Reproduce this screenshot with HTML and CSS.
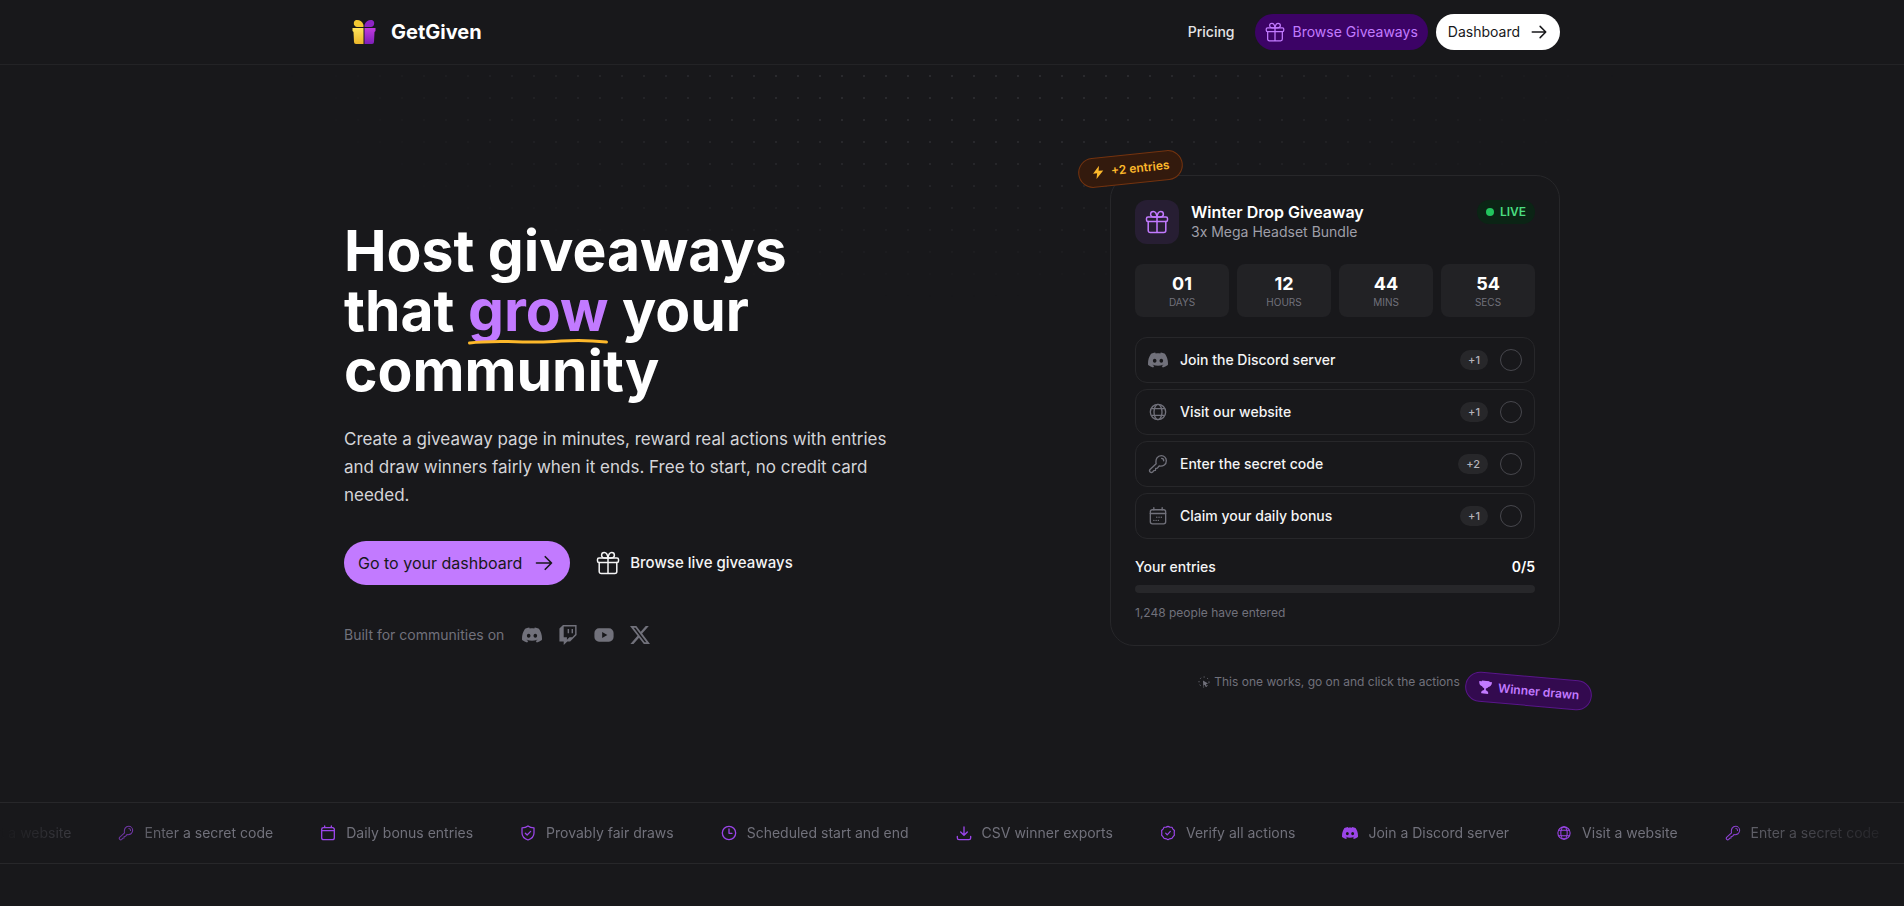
FILE: index.html
```html
<!DOCTYPE html>
<html lang="en">
<head>
    <meta charset="UTF-8">
    <meta name="viewport" content="width=device-width, initial-scale=1.0">
    <title>GetGiven - Host giveaways that grow your community</title>
    <link rel="stylesheet" href="styles.css">
</head>
<body>

<!-- Icon sprite -->
<svg class="sprite" aria-hidden="true">
    <symbol id="gift" viewBox="0 0 24 24">
        <g fill="none" stroke="currentColor" stroke-width="1.5" stroke-linecap="round" stroke-linejoin="round">
            <rect x="1.5" y="7" width="21" height="4.5" rx="1.5"/>
            <path d="M3.2 11.5v9a2 2 0 0 0 2 2h13.6a2 2 0 0 0 2-2v-9M12 7v15.5M12 7C11.5 3 10 1.5 8.3 1.5a2.7 2.7 0 0 0-2.7 2.7C5.6 6 7 7 9 7h3M12 7c.5-4 2-5.5 3.7-5.5a2.7 2.7 0 0 1 2.7 2.7C18.4 6 17 7 15 7h-3"/>
        </g>
    </symbol>
    <symbol id="arrow" viewBox="0 0 24 24">
        <path fill="none" stroke="currentColor" stroke-width="2" stroke-linecap="round" stroke-linejoin="round" d="M3 12h18M13.5 4.5 21 12l-7.5 7.5"/>
    </symbol>
    <symbol id="discord" viewBox="0 0 24 24">
        <path fill="currentColor" d="M20.317 4.3698a19.7913 19.7913 0 00-4.8851-1.5152.0741.0741 0 00-.0785.0371c-.211.3753-.4447.8648-.6083 1.2495-1.8447-.2762-3.68-.2762-5.4868 0-.1636-.3933-.4058-.8742-.6177-1.2495a.077.077 0 00-.0785-.037 19.7363 19.7363 0 00-4.8852 1.515.0699.0699 0 00-.0321.0277C.5334 9.0458-.319 13.5799.0992 18.0578a.0824.0824 0 00.0312.0561c2.0528 1.5076 4.0413 2.4228 5.9929 3.0294a.0777.0777 0 00.0842-.0276c.4616-.6304.8731-1.2952 1.226-1.9942a.076.076 0 00-.0416-.1057c-.6528-.2476-1.2743-.5495-1.8722-.8923a.077.077 0 01-.0076-.1277c.1258-.0943.2517-.1923.3718-.2914a.0743.0743 0 01.0776-.0105c3.9278 1.7933 8.18 1.7933 12.0614 0a.0739.0739 0 01.0785.0095c.1202.099.246.1981.3728.2924a.077.077 0 01-.0066.1276 12.2986 12.2986 0 01-1.873.8914.0766.0766 0 00-.0407.1067c.3604.698.7719 1.3628 1.225 1.9932a.076.076 0 00.0842.0286c1.961-.6067 3.9495-1.5219 6.0023-3.0294a.077.077 0 00.0313-.0552c.5004-5.177-.8382-9.6739-3.5485-13.6604a.061.061 0 00-.0312-.0286zM8.02 15.3312c-1.1825 0-2.1569-1.0857-2.1569-2.419 0-1.3332.9555-2.4189 2.157-2.4189 1.2108 0 2.1757 1.0952 2.1568 2.419 0 1.3332-.9555 2.4189-2.1569 2.4189zm7.9748 0c-1.1825 0-2.1569-1.0857-2.1569-2.419 0-1.3332.9554-2.4189 2.1569-2.4189 1.2108 0 2.1757 1.0952 2.1568 2.419 0 1.3332-.946 2.4189-2.1568 2.4189Z"/>
    </symbol>
    <symbol id="twitch" viewBox="0 0 24 24">
        <path fill="currentColor" d="M11.571 4.714h1.715v5.143H11.57zm4.715 0H18v5.143h-1.714zM6 0L1.714 4.286v15.428h5.143V24l4.286-4.286h3.428L22.286 12V0zm14.571 11.143l-3.428 3.428h-3.429l-3 3v-3H6.857V1.714h13.714Z"/>
    </symbol>
    <symbol id="youtube" viewBox="0 0 24 24">
        <path fill="currentColor" fill-rule="evenodd" d="M6 4h12a5.5 5.5 0 0 1 5.5 5.5v5A5.5 5.5 0 0 1 18 20H6a5.5 5.5 0 0 1-5.5-5.5v-5A5.5 5.5 0 0 1 6 4zm3.8 4.5v7L16 12z"/>
    </symbol>
    <symbol id="x-logo" viewBox="0 0 24 24">
        <path fill="currentColor" d="M18.901 1.153h3.68l-8.04 9.19L24 22.846h-7.406l-5.8-7.584-6.638 7.584H.474l8.6-9.83L0 1.154h7.594l5.243 6.932ZM17.61 20.644h2.039L6.486 3.24H4.298Z"/>
    </symbol>
    <symbol id="globe" viewBox="0 0 24 24">
        <g fill="none" stroke="currentColor" stroke-width="1.6">
            <circle cx="12" cy="12" r="9.2"/>
            <ellipse cx="12" cy="12" rx="4.8" ry="9.2"/>
            <path d="M4 8h16M4 16h16"/>
        </g>
    </symbol>
    <symbol id="key" viewBox="0 0 24 24">
        <g fill="none" stroke="currentColor" stroke-width="1.6" stroke-linecap="round" stroke-linejoin="round">
            <path d="M9.8 11.8C8.6 6 11.5 2 16 2a6 6 0 0 1 6 6c0 4.5-3.6 7.2-8.6 6.4L11.2 17l-2 .4-.3 2.2-2 .4L5.600 21.600a2.200 2.200 0 0 1-3.200-3z"/>
            <path d="M16.300 5.300a2.700 2.700 0 0 1 2.500 2.800"/>
        </g>
    </symbol>
    <symbol id="calendar-days" viewBox="0 0 24 24">
        <g fill="none" stroke="currentColor" stroke-width="1.6" stroke-linecap="round">
            <rect x="2.8" y="4.5" width="18.4" height="17" rx="2.5"/>
            <path d="M2.8 9h18.400M7 2v2.500M17 2v2.500"/>
            <path stroke-dasharray=".1 2.6" d="M10.500 13.500h7M7 17.300h8"/>
        </g>
    </symbol>
    <symbol id="calendar" viewBox="0 0 24 24">
        <path fill="none" stroke="currentColor" stroke-width="2" stroke-linecap="round" d="M5 4h14a2.5 2.5 0 0 1 2.5 2.5V19a3 3 0 0 1-3 3h-13a3 3 0 0 1-3-3V6.500A2.5 2.5 0 0 1 5 4zM2.500 8.500h19M7 1.500V4M17 1.500V4"/>
    </symbol>
    <symbol id="shield" viewBox="0 0 24 24">
        <path fill="none" stroke="currentColor" stroke-width="1.9" stroke-linecap="round" stroke-linejoin="round" d="M12 1.500c2.500 2 5.500 2.800 9 2.800V12c0 5-3.500 8.600-9 10.500C6.500 20.600 3 17 3 12V4.300c3.500 0 6.500-.8 9-2.800zM8 12.300l2.700 2.700L16 9.500"/>
    </symbol>
    <symbol id="clock" viewBox="0 0 24 24">
        <g fill="none" stroke="currentColor" stroke-width="2" stroke-linecap="round" stroke-linejoin="round">
            <circle cx="12" cy="12" r="10"/>
            <path d="M12 6v6.500h4.500"/>
        </g>
    </symbol>
    <symbol id="download" viewBox="0 0 24 24">
        <path fill="none" stroke="currentColor" stroke-width="2" stroke-linecap="round" stroke-linejoin="round" d="M12 3v12M7 10.500l5 5 5-5M2 17v2.500A2.500 2.500 0 0 0 4.500 22h15a2.500 2.500 0 0 0 2.500-2.500V17"/>
    </symbol>
    <symbol id="verify" viewBox="0 0 24 24">
        <g fill="none" stroke="currentColor" stroke-width="1.8" stroke-linecap="round" stroke-linejoin="round">
            <path d="M12 2l2.800 1.200 3.100.2 1.500 2.700 2.200 2.200-.3 3.700.3 3.300-2.200 2.400-1.700 2.500-3.200.5L12 22l-2.500-1.300-3.200-.5-1.700-2.500-2.200-2.400.3-3.300-.3-3.700 2.200-2.200 1.500-2.700 3.100-.2z"/>
            <path d="M8.500 12.300l2.300 2.400 4.700-5.200"/>
        </g>
    </symbol>
    <symbol id="bolt" viewBox="0 0 24 24">
        <path fill="currentColor" d="M14.500 1 3 13.500h7L8 23 21 9.500h-8z"/>
    </symbol>
    <symbol id="trophy" viewBox="0 0 24 24">
        <path fill="currentColor" d="M5.500 1h13v1.500H23c0 5-2 7.800-5.500 8.500A7 7 0 0 1 13.500 14v3c2.500.5 4 2 4.500 4v2H6v-2c.5-2 2-3.500 4.500-4v-3a7 7 0 0 1-4-3C3 10.300 1 7.500 1 2.500h4.500z"/>
    </symbol>
    <symbol id="click" viewBox="0 0 24 24">
        <path fill="currentColor" d="M10 9l10 6-4 1.500 2 4.500-2.500 1-2-4.500L10.500 20z"/>
        <circle cx="12" cy="12" r="10" fill="none" stroke="currentColor" stroke-width="2" stroke-dasharray="2.500 5"/>
    </symbol>
</svg>

<header class="header">
    <div class="container header-inner">
        <a href="#" class="logo">
            <svg class="logo-mark" viewBox="0 0 24 26" aria-hidden="true">
                <defs>
                    <linearGradient id="gold" x1="0" y1="0" x2="0" y2="1">
                        <stop offset="0" stop-color="#ffe45c"/>
                        <stop offset="1" stop-color="#eab529"/>
                    </linearGradient>
                    <linearGradient id="violet" x1="0" y1="0" x2="0" y2="1">
                        <stop offset="0" stop-color="#c13be0"/>
                        <stop offset="1" stop-color="#7d1fb8"/>
                    </linearGradient>
                </defs>
                <path fill="#f2c832" d="M11.500 8V6C10.500 2.500 8 1 5 1 2 1 1.500 3.500 2 5.500 2.500 7 3.500 8 5 8z"/>
                <path fill="#8e24c4" d="M12.500 8V6C13.500 2.500 16 1 19 1c3 0 3.500 2.500 3 4.500C21.500 7 20.500 8 19 8z"/>
                <path fill="url(#gold)" d="M.5 9h11v16H4a2 2 0 0 1-2-2L1.500 13 .5 12z"/>
                <path fill="url(#violet)" d="M12.500 9h11v3l-1 1-.5 10a2 2 0 0 1-2 2h-7.500z"/>
            </svg>
            <span>GetGiven</span>
        </a>
        <nav class="nav">
            <a href="#" class="nav-link">Pricing</a>
            <a href="#" class="btn btn-violet"><svg class="icon-20"><use href="#gift"/></svg>Browse Giveaways</a>
            <a href="#" class="btn btn-white">Dashboard<svg class="icon-18"><use href="#arrow"/></svg></a>
        </nav>
    </div>
</header>

<main>
    <section class="hero">
        <div class="container hero-inner">
            <div class="hero-copy">
                <h1>Host giveaways that <span class="grow">grow<svg class="underline" viewBox="0 0 136 8" preserveAspectRatio="none" aria-hidden="true"><path d="M1.500 6C22 3 42 5 68 5S100 1 134 5"/></svg></span> your community</h1>
                <p class="lead">Create a giveaway page in minutes, reward real actions with entries and draw winners fairly when it ends. Free to start, no credit card needed.</p>
                <div class="cta">
                    <a href="#" class="btn-primary">Go to your dashboard<svg class="icon-20"><use href="#arrow"/></svg></a>
                    <a href="#" class="btn-ghost"><svg class="icon-24"><use href="#gift"/></svg>Browse live giveaways</a>
                </div>
                <div class="built-for">
                    <span>Built for communities on</span>
                    <div class="socials">
                        <svg class="icon-20"><use href="#discord"/></svg>
                        <svg class="icon-20"><use href="#twitch"/></svg>
                        <svg class="icon-20"><use href="#youtube"/></svg>
                        <svg class="icon-20"><use href="#x-logo"/></svg>
                    </div>
                </div>
            </div>

            <!-- Demo giveaway -->
            <div class="demo">
                <div class="card">
                    <div class="card-head">
                        <div class="card-icon"><svg class="icon-24"><use href="#gift"/></svg></div>
                        <div class="card-title">
                            <h2>Winter Drop Giveaway</h2>
                            <p>3x Mega Headset Bundle</p>
                        </div>
                        <span class="live">LIVE</span>
                    </div>

                    <div class="countdown">
                        <div class="unit"><b>01</b><span>DAYS</span></div>
                        <div class="unit"><b>12</b><span>HOURS</span></div>
                        <div class="unit"><b>44</b><span>MINS</span></div>
                        <div class="unit"><b>54</b><span>SECS</span></div>
                    </div>

                    <div class="actions">
                        <button class="action" type="button">
                            <svg class="icon-20"><use href="#discord"/></svg>
                            <span class="action-name">Join the Discord server</span>
                            <span class="points">+1</span>
                            <span class="check"></span>
                        </button>
                        <button class="action" type="button">
                            <svg class="icon-20"><use href="#globe"/></svg>
                            <span class="action-name">Visit our website</span>
                            <span class="points">+1</span>
                            <span class="check"></span>
                        </button>
                        <button class="action" type="button">
                            <svg class="icon-20"><use href="#key"/></svg>
                            <span class="action-name">Enter the secret code</span>
                            <span class="points">+2</span>
                            <span class="check"></span>
                        </button>
                        <button class="action" type="button">
                            <svg class="icon-20"><use href="#calendar-days"/></svg>
                            <span class="action-name">Claim your daily bonus</span>
                            <span class="points">+1</span>
                            <span class="check"></span>
                        </button>
                    </div>

                    <div class="entries">
                        <label for="entries">Your entries</label>
                        <b>0/5</b>
                    </div>
                    <progress id="entries" class="bar" value="0" max="5"></progress>
                    <p class="entered">1,248 people have entered</p>
                </div>
                <p class="hint"><svg class="icon-12"><use href="#click"/></svg>This one works, go on and click the actions</p>

                <span class="badge badge-entries"><svg class="icon-14"><use href="#bolt"/></svg>+2 entries</span>
                <span class="badge badge-winner"><svg class="icon-14"><use href="#trophy"/></svg>Winner drawn</span>
            </div>
        </div>
    </section>

    <!-- Feature ticker -->
    <section class="ticker">
        <ul class="ticker-track">
            <li><svg class="icon-16"><use href="#globe"/></svg>Visit a website</li>
            <li><svg class="icon-16"><use href="#key"/></svg>Enter a secret code</li>
            <li><svg class="icon-16"><use href="#calendar"/></svg>Daily bonus entries</li>
            <li><svg class="icon-16"><use href="#shield"/></svg>Provably fair draws</li>
            <li><svg class="icon-16"><use href="#clock"/></svg>Scheduled start and end</li>
            <li><svg class="icon-16"><use href="#download"/></svg>CSV winner exports</li>
            <li><svg class="icon-16"><use href="#verify"/></svg>Verify all actions</li>
            <li><svg class="icon-16"><use href="#discord"/></svg>Join a Discord server</li>
            <li><svg class="icon-16"><use href="#globe"/></svg>Visit a website</li>
            <li><svg class="icon-16"><use href="#key"/></svg>Enter a secret code</li>
        </ul>
    </section>
</main>

</body>
</html>
```

FILE: styles.css
```css
* {
    box-sizing: border-box;
}

body {
    margin: 0;
    font-family: Inter, "Liberation Sans", sans-serif;
    font-size: 14px;
    line-height: 20px;
    color: #fff;
    background-color: #18181b;
    overflow-x: hidden;
}

h1, h2, p, ul {
    margin: 0;
    padding: 0;
}

a {
    color: inherit;
    text-decoration: none;
}

svg {
    flex-shrink: 0;
}

.sprite {
    position: absolute;
    width: 0;
    height: 0;
}

.icon-12 { width: 12px; height: 12px; }
.icon-14 { width: 14px; height: 14px; }
.icon-16 { width: 16px; height: 16px; }
.icon-18 { width: 18px; height: 18px; }
.icon-20 { width: 20px; height: 20px; }
.icon-24 { width: 24px; height: 24px; }

.container {
    max-width: 1280px;
    margin: 0 auto;
    padding: 0 32px;
}

/* Header */
.header {
    border-bottom: 1px solid #232326;
}

.header-inner {
    display: flex;
    align-items: center;
    justify-content: space-between;
    height: 64px;
}

.logo {
    display: flex;
    align-items: center;
    gap: 15px;
    padding-left: 8px;
    font-size: 20px;
    font-weight: 700;
}

.logo-mark {
    width: 24px;
    height: 26px;
}

.nav {
    display: flex;
    align-items: center;
    gap: 8px;
}

.nav-link {
    padding: 0 12px;
    font-weight: 500;
    color: #e4e4e7;
}

.btn {
    display: flex;
    align-items: center;
    gap: 8px;
    height: 36px;
    padding: 0 12px;
    border-radius: 18px;
}

.btn-violet {
    padding: 0 10px;
    color: #c27aff;
    background-color: #3c0366;
}

.btn-white {
    gap: 10px;
    color: #18181b;
    background-color: #fff;
}

/* Hero */
.hero {
    position: relative;
    padding: 110px 0;
}

.hero::before {
    content: "";
    position: absolute;
    inset: 0;
    background-image: radial-gradient(#2a2a2e 1px, transparent 1px);
    background-size: 22px 22px;
    background-position: center top;
    -webkit-mask-image: radial-gradient(ellipse 50% 45% at 50% 0, #000 20%, transparent 70%);
    mask-image: radial-gradient(ellipse 50% 45% at 50% 0, #000 20%, transparent 70%);
}

.hero-inner {
    position: relative;
    display: flex;
    align-items: center;
    justify-content: space-between;
    gap: 48px;
}

.hero-copy {
    max-width: 576px;
    padding-bottom: 2px;
}

h1 {
    max-width: 480px;
    font-size: 57px;
    line-height: 60px;
    font-weight: 700;
}

.grow {
    position: relative;
    color: #c27aff;
}

.underline {
    position: absolute;
    left: 0;
    bottom: 0;
    width: 100%;
    height: 8px;
    fill: none;
    stroke: #fdb82b;
    stroke-width: 3;
    stroke-linecap: round;
}

.lead {
    margin-top: 24px;
    font-size: 17px;
    line-height: 28px;
    color: #d4d4d8;
}

.cta {
    display: flex;
    align-items: center;
    gap: 26px;
    margin-top: 32px;
}

.btn-primary, .btn-ghost {
    display: flex;
    align-items: center;
    height: 44px;
}

.btn-primary {
    gap: 12px;
    padding: 0 16px 0 14px;
    border-radius: 22px;
    font-size: 16px;
    color: #18181b;
    background-color: #c27aff;
}

.btn-ghost {
    gap: 10px;
    font-size: 15px;
    font-weight: 500;
    color: #f4f4f5;
}

.built-for {
    display: flex;
    align-items: center;
    gap: 18px;
    margin-top: 40px;
    color: #71717b;
}

.socials {
    display: flex;
    gap: 16px;
}

/* Demo card */
.demo {
    position: relative;
    width: 450px;
}

.card {
    padding: 24px;
    border: 1px solid #27272a;
    border-radius: 24px;
    background-color: #18181b;
}

.card-head {
    display: flex;
    align-items: flex-start;
    gap: 12px;
}

.card-icon {
    display: flex;
    align-items: center;
    justify-content: center;
    width: 44px;
    height: 44px;
    border-radius: 12px;
    color: #c27aff;
    background-color: #271e33;
}

.card-title {
    flex: 1;
    padding-top: 2px;
}

.card-title h2 {
    font-size: 16px;
    line-height: 20px;
    font-weight: 600;
}

.card-title p {
    color: #9f9fa9;
}

.live {
    display: flex;
    align-items: center;
    gap: 6px;
    padding: 2px 9px;
    border-radius: 12px;
    font-size: 12px;
    font-weight: 600;
    color: #4ade80;
    background-color: #0b2415;
}

.live::before {
    content: "";
    width: 8px;
    height: 8px;
    border-radius: 50%;
    background-color: #22c55e;
}

.countdown {
    display: grid;
    grid-template-columns: repeat(4, 1fr);
    gap: 8px;
    margin-top: 20px;
}

.unit {
    display: flex;
    flex-direction: column;
    padding: 8px 0;
    border-radius: 8px;
    text-align: center;
    background-color: #222225;
}

.unit b {
    font-size: 18px;
    line-height: 24px;
}

.unit span {
    font-size: 10px;
    line-height: 13px;
    color: #71717b;
}

.actions {
    display: flex;
    flex-direction: column;
    gap: 6px;
    margin-top: 20px;
}

.action {
    display: flex;
    align-items: center;
    gap: 12px;
    height: 46px;
    padding: 0 12px;
    border: 1px solid #27272a;
    border-radius: 12px;
    font: inherit;
    font-weight: 500;
    text-align: left;
    color: #71717b;
    background: none;
    cursor: pointer;
}

.action-name {
    flex: 1;
    color: #f4f4f5;
}

.points {
    padding: 0 8px;
    border-radius: 10px;
    font-size: 11px;
    color: #b4b4bb;
    background-color: #27272a;
}

.check {
    width: 22px;
    height: 22px;
    border: 1px solid #47474d;
    border-radius: 50%;
}

.entries {
    display: flex;
    justify-content: space-between;
    margin-top: 18px;
    font-weight: 500;
    color: #f4f4f5;
}

.entries b {
    font-weight: 600;
    color: #fff;
}

.bar {
    display: block;
    width: 100%;
    height: 8px;
    margin-top: 8px;
    border: none;
    border-radius: 4px;
    overflow: hidden;
    appearance: none;
    background-color: #27272a;
}

.bar::-webkit-progress-bar {
    background-color: #27272a;
}

.bar::-webkit-progress-value {
    background-color: #c27aff;
}

.entered {
    margin-top: 12px;
    font-size: 12px;
    line-height: 16px;
    color: #71717b;
}

.hint {
    display: flex;
    align-items: center;
    justify-content: center;
    gap: 4px;
    margin-top: 26px;
    padding-right: 12px;
    font-size: 12px;
    color: #71717b;
}

.badge {
    position: absolute;
    display: flex;
    align-items: center;
    gap: 6px;
    height: 30px;
    padding: 0 12px;
    border: 1px solid;
    border-radius: 15px;
    font-size: 12px;
    font-weight: 600;
}

.badge-entries {
    top: -21px;
    left: -32px;
    color: #fdb82b;
    border-color: #74330f;
    background-color: #331a0d;
    transform: rotate(-6deg);
}

.badge-winner {
    right: -32px;
    bottom: -14px;
    color: #c27aff;
    border-color: #59168b;
    background-color: #330a4f;
    transform: rotate(5deg);
}

/* Ticker */
.ticker {
    padding: 20px 0;
    border-top: 1px solid #27272a;
    border-bottom: 1px solid #27272a;
    overflow: hidden;
}

.ticker-track {
    display: flex;
    gap: 47px;
    list-style: none;
    white-space: nowrap;
    color: #71717b;
    -webkit-mask-image: linear-gradient(to right, transparent, #000 10%, #000 90%, transparent);
    mask-image: linear-gradient(to right, transparent, #000 10%, #000 90%, transparent);
}

.ticker-track li {
    display: flex;
    align-items: center;
    gap: 10px;
}

.ticker-track li:first-child {
    margin-left: -50px;
}

.ticker-track svg {
    color: #9a45e8;
}
```
